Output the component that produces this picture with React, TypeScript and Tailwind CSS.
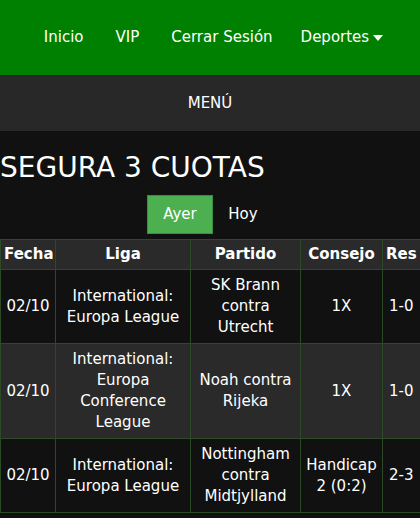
import React from "react";

const rows = [
  { fecha: "02/10", liga: "International: Europa League", partido: "SK Brann contra Utrecht", consejo: "1X", res: "1-0", bg: "bg-[#111111]" },
  { fecha: "02/10", liga: "International: Europa Conference League", partido: "Noah contra Rijeka", consejo: "1X", res: "1-0", bg: "bg-[#2a2a2a]" },
  { fecha: "02/10", liga: "International: Europa League", partido: "Nottingham contra Midtjylland", consejo: "Handicap 2 (0:2)", res: "2-3", bg: "bg-[#111111]" },
];

export default function App() {
  return (
    <div className="min-h-[518px] bg-[#111111] text-white overflow-hidden" style={{ fontFamily: "Verdana, 'DejaVu Sans', sans-serif" }}>
      <nav className="h-[75px] bg-[#008000] flex items-center justify-center text-[15px] pl-[3px]">
        <a className="px-4">Inicio</a>
        <a className="px-4">VIP</a>
        <a className="px-4">Cerrar Sesión</a>
        <a className="px-3 flex items-center gap-[4px]">
          Deportes
          <svg width="10" height="6" viewBox="0 0 10 6"><path d="M0 0 L10 0 L5 6 Z" fill="white" /></svg>
        </a>
      </nav>
      <div className="h-[56px] bg-[#282828] flex items-center justify-center text-[15px] border-t border-[#1e1e1e]">MENÚ</div>
      <h1 className="text-[28px] leading-[34px] mt-[20px] ml-0">SEGURA 3 CUOTAS</h1>
      <div className="flex justify-center mt-[10px] text-[15px]">
        <button className="w-[66px] h-[39px] bg-[#4caf50] border border-[#3b8e3f]">Ayer</button>
        <button className="w-[60px] h-[39px]">Hoy</button>
      </div>
      <div className="mt-[5px] overflow-hidden">
        <table className="border-collapse text-[15px] leading-[21px] text-center table-fixed w-[440px]">
          <colgroup>
            <col className="w-[55px]" />
            <col className="w-[135px]" />
            <col className="w-[110px]" />
            <col className="w-[82px]" />
            <col className="w-[58px]" />
          </colgroup>
          <thead>
            <tr className="bg-[#2a2a2a] font-bold">
              {["Fecha", "Liga", "Partido", "Consejo", "Res"].map((h, i) => (
                <th key={i} className={`border border-[#2d4a26] py-[4px] px-[3px] ${i === 4 ? "text-left" : ""}`}>{h}</th>
              ))}
            </tr>
          </thead>
          <tbody>
            {rows.map((r, i) => (
              <tr key={i} className={r.bg}>
                <td className="border border-[#2d4a26] py-[5px] px-[3px]">{r.fecha}</td>
                <td className="border border-[#2d4a26] py-[5px] px-[3px]">{r.liga}</td>
                <td className="border border-[#2d4a26] py-[5px] px-[3px]">{r.partido}</td>
                <td className="border border-[#2d4a26] py-[5px] px-[3px]">{r.consejo}</td>
                <td className="border border-[#2d4a26] py-[5px] px-[6px] text-left">{r.res}</td>
              </tr>
            ))}
          </tbody>
        </table>
      </div>
    </div>
  );
}
